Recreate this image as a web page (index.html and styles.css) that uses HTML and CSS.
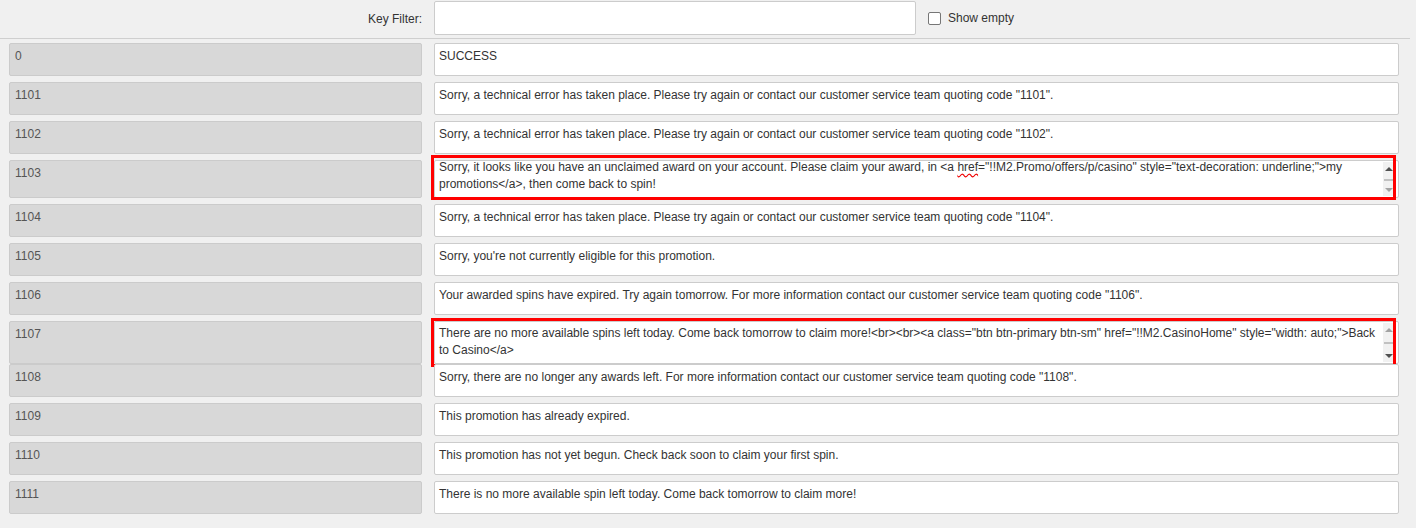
FILE: index.html
```html
<!DOCTYPE html>
<html>
<head>
<meta charset="utf-8">
<link rel="stylesheet" href="styles.css">
</head>
<body>
<div class="page">
  <div class="filter-bar">
    <label class="filter-label">Key Filter:</label>
    <div class="filter-input"></div>
    <div class="check-wrap">
      <span class="checkbox"></span>
      <span class="check-text">Show empty</span>
    </div>
  </div>
  <div class="rows">
    <div class="row"><div class="key">0</div><div class="val">SUCCESS</div></div>
    <div class="row"><div class="key">1101</div><div class="val">Sorry, a technical error has taken place. Please try again or contact our customer service team quoting code "1101".</div></div>
    <div class="row"><div class="key">1102</div><div class="val">Sorry, a technical error has taken place. Please try again or contact our customer service team quoting code "1102".</div></div>
    <div class="row row-tall-a"><div class="key">1103</div><div class="val val-marked val-up"><div class="val-text">Sorry, it looks like you have an unclaimed award on your account. Please claim your award, in &lt;a <span class="spell">href</span>="!!M2.Promo/offers/p/casino" style="text-decoration: underline;"&gt;my promotions&lt;/a&gt;, then come back to spin!</div><div class="sbar"><span class="arr-up dark"></span><span class="thumb"></span><span class="arr-down"></span></div><div class="mark"></div></div></div>
    <div class="row"><div class="key">1104</div><div class="val">Sorry, a technical error has taken place. Please try again or contact our customer service team quoting code "1104".</div></div>
    <div class="row"><div class="key">1105</div><div class="val">Sorry, you're not currently eligible for this promotion.</div></div>
    <div class="row"><div class="key">1106</div><div class="val">Your awarded spins have expired. Try again tomorrow. For more information contact our customer service team quoting code "1106".</div></div>
    <div class="row row-tall-b"><div class="key">1107</div><div class="val val-marked"><div class="val-text">There are no more available spins left today. Come back tomorrow to claim more!&lt;br&gt;&lt;br&gt;&lt;a class="btn btn-primary btn-sm" href="!!M2.CasinoHome" style="width: auto;"&gt;Back to Casino&lt;/a&gt;</div><div class="sbar"><span class="arr-up"></span><span class="thumb"></span><span class="arr-down dark"></span></div><div class="mark"></div></div></div>
    <div class="row"><div class="key">1108</div><div class="val">Sorry, there are no longer any awards left. For more information contact our customer service team quoting code "1108".</div></div>
    <div class="row"><div class="key">1109</div><div class="val">This promotion has already expired.</div></div>
    <div class="row"><div class="key">1110</div><div class="val">This promotion has not yet begun. Check back soon to claim your first spin.</div></div>
    <div class="row"><div class="key">1111</div><div class="val">There is no more available spin left today. Come back tomorrow to claim more!</div></div>
  </div>
</div>
</body>
</html>
```

FILE: styles.css
```css
html, body {
  margin: 0;
  padding: 0;
  background: #f0f0f0;
}
body {
  font-family: "Liberation Sans", Arial, sans-serif;
  font-size: 12px;
  color: #333;
}
.page {
  width: 1410px;
}
.filter-bar {
  display: flex;
  align-items: center;
  height: 38px;
  border-bottom: 1px solid #cfcfcf;
}
.filter-label {
  width: 422px;
  text-align: right;
  color: #333;
  margin-top: -1px;
}
.filter-input {
  margin-left: 12px;
  width: 480px;
  height: 32px;
  background: #fff;
  border: 1px solid #ccc;
  border-radius: 2px;
  margin-top: -3px;
}
.check-wrap {
  display: flex;
  align-items: center;
  margin-left: 12px;
  margin-top: -2px;
}
.checkbox {
  width: 11px;
  height: 11px;
  border: 1px solid #767676;
  border-radius: 2px;
  background: #fff;
}
.check-text {
  margin-left: 7px;
  color: #333;
  margin-top: -1px;
}
.rows {
  display: flex;
  flex-direction: column;
  gap: 6px;
  padding: 4px 0 0 9px;
}
.row {
  display: grid;
  grid-template-columns: 413px 965px;
  column-gap: 12px;
  height: 33px;
}
.row-tall-a { height: 38px; }
.row-tall-b { height: 37px; }
.key {
  box-sizing: border-box;
  background: #d8d8d8;
  border: 1px solid #cbcbcb;
  border-radius: 2px;
  padding: 4px 5px;
  line-height: 17px;
  color: #555;
}
.val {
  position: relative;
  box-sizing: border-box;
  background: #fff;
  border: 1px solid #ccc;
  border-radius: 2px;
  padding: 4px 4px;
  line-height: 17px;
  color: #333;
}
.val-marked {
  padding-right: 16px;
  padding-top: 3px;
}
.val-up .val-text {
  margin-top: -5px;
}
.spell {
  text-decoration: underline wavy #e00;
  text-decoration-skip-ink: none;
  text-underline-offset: 2px;
}
.sbar {
  position: absolute;
  top: 1px;
  bottom: 1px;
  right: 3px;
  width: 12px;
  background: #f1f1f1;
  display: flex;
  flex-direction: column;
  align-items: center;
  justify-content: space-between;
  padding: 5px 0 4px;
  box-sizing: border-box;
}
.arr-up, .arr-down {
  width: 0;
  height: 0;
  border-left: 4px solid transparent;
  border-right: 4px solid transparent;
}
.arr-up { border-bottom: 4px solid #a3a3a3; }
.arr-down { border-top: 4px solid #a3a3a3; }
.arr-up.dark { border-bottom-color: #505050; }
.arr-down.dark { border-top-color: #505050; }
.thumb {
  width: 10px;
  height: 2px;
  background: #c1c1c1;
}
.mark {
  position: absolute;
  left: -4px;
  right: 2px;
  top: -4px;
  bottom: -4px;
  border: 3px solid #f00;
  pointer-events: none;
}
.row-tall-a .mark { top: -6px; bottom: -3px; }
```
